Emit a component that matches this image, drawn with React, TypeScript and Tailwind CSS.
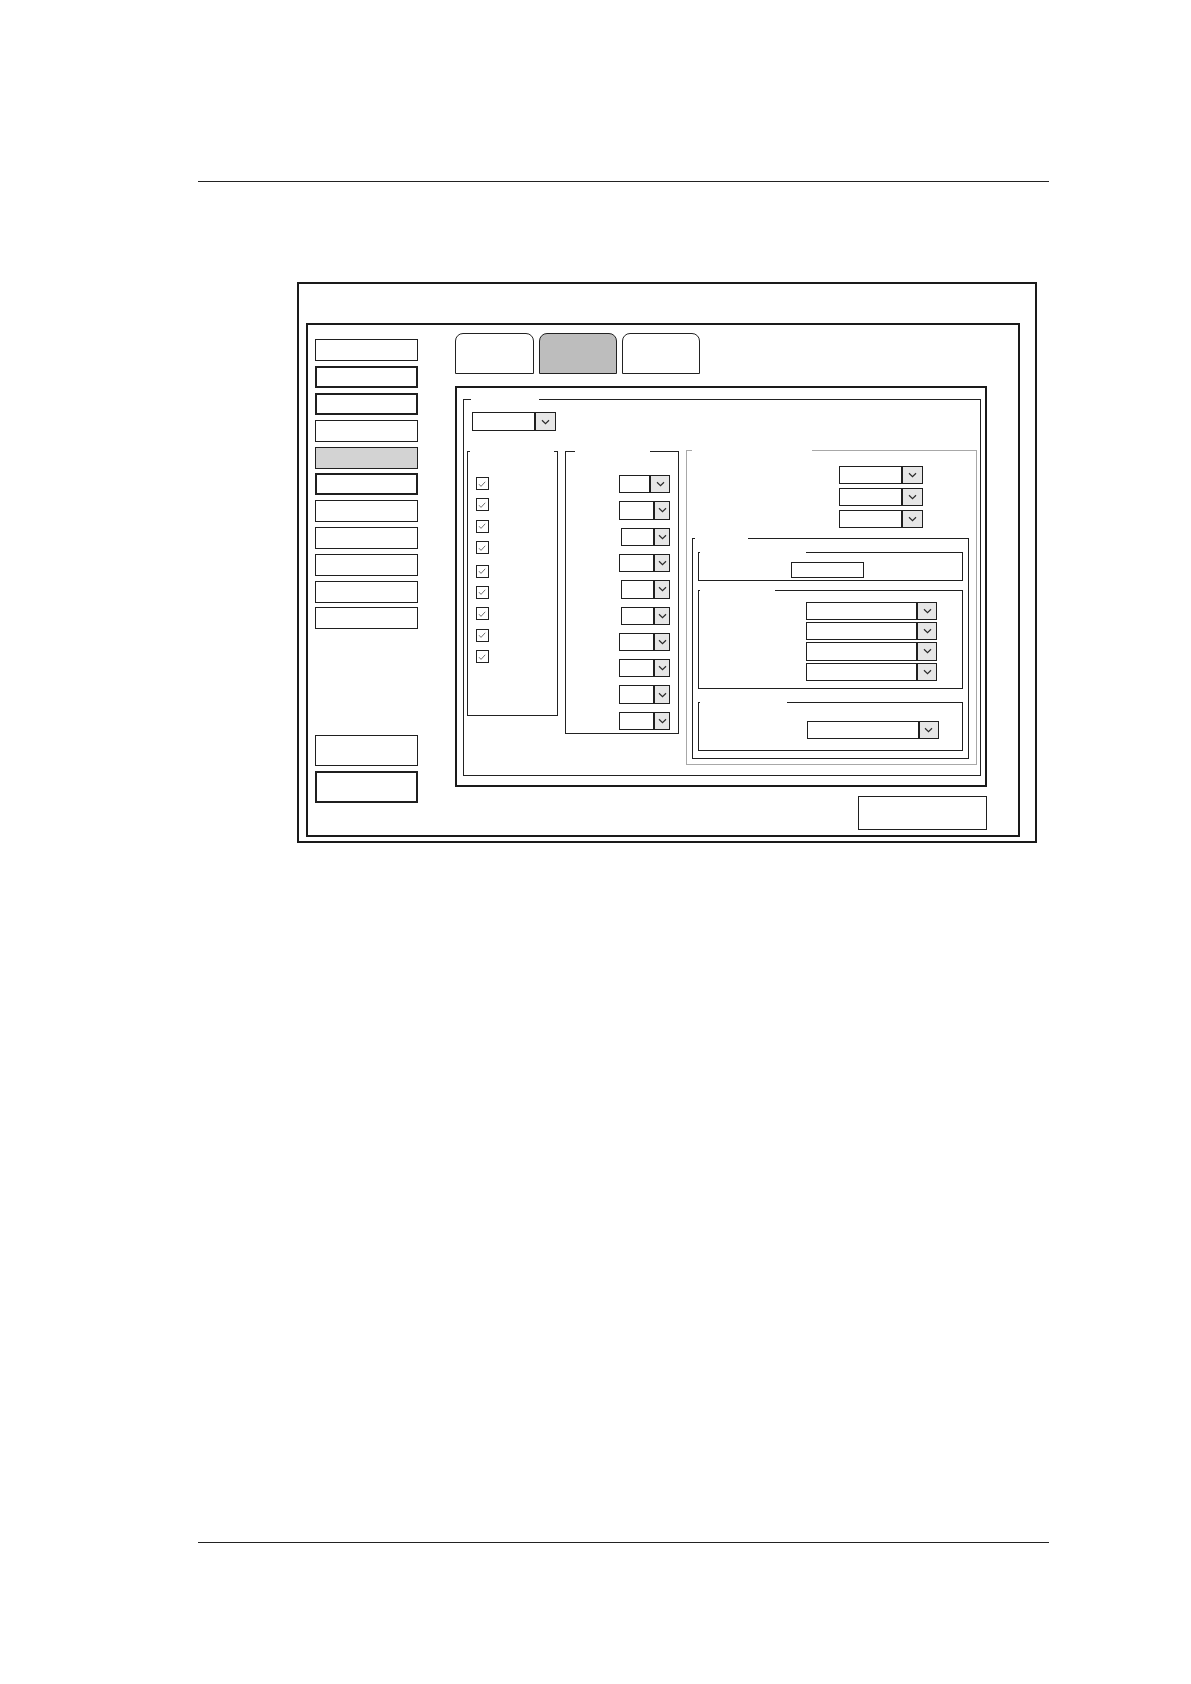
import React from 'react';

// Blank settings dialog drawn as a wireframe (manual illustration style).

const Chevron: React.FC = () => (
  <svg width="9" height="6" viewBox="0 0 9 6" fill="none">
    <path d="M1 1.2 L4.5 4.6 L8 1.2" stroke="#2a2a2a" strokeWidth="1.2" />
  </svg>
);

interface DropdownProps {
  box: string; // full width class of the text part
  arrow: string; // full width class of the arrow part
  height: string;
}

const Dropdown: React.FC<DropdownProps> = ({ box, arrow, height }) => (
  <div className={`flex shrink-0 ${height}`}>
    <div className={`${box} h-full border border-[#1f1f1f] bg-white`} />
    <div
      className={`${arrow} h-full border border-[#1f1f1f] bg-[#e6e6e6] flex items-center justify-center`}
    >
      <Chevron />
    </div>
  </div>
);

const CheckBox: React.FC<{ extra?: string }> = ({ extra = '' }) => (
  <div
    className={`w-[13px] h-[13px] border border-[#222] bg-white flex items-center justify-center ${extra}`}
  >
    <svg width="10" height="10" viewBox="0 0 10 10" fill="none">
      <path d="M2 5.2 L4 7.4 L8.2 2.8" stroke="#707070" strokeWidth="1" />
    </svg>
  </div>
);

const SIDE_BUTTONS = [
  'border',
  'border-2',
  'border-2',
  'border',
  'border bg-[#d3d3d3]',
  'border-2',
  'border',
  'border',
  'border',
  'border',
  'border',
];

// middle column selectors: text part width, arrow part width
const MID_SELECTS = [
  { box: 'w-[31px]', arrow: 'w-[20px]' },
  { box: 'w-[35px]', arrow: 'w-[16px]' },
  { box: 'w-[33px]', arrow: 'w-[16px]' },
  { box: 'w-[35px]', arrow: 'w-[16px]' },
  { box: 'w-[33px]', arrow: 'w-[16px]' },
  { box: 'w-[33px]', arrow: 'w-[16px]' },
  { box: 'w-[35px]', arrow: 'w-[16px]' },
  { box: 'w-[35px]', arrow: 'w-[16px]' },
  { box: 'w-[35px]', arrow: 'w-[16px]' },
  { box: 'w-[35px]', arrow: 'w-[16px]' },
];

const App: React.FC = () => {
  return (
    <div className="w-[1191px] h-[1684px] bg-white overflow-hidden font-['Liberation_Sans',sans-serif]">
      {/* header rule */}
      <div className="ml-[198px] mt-[181px] w-[851px] h-[1.4px] bg-[#222]" />

      {/* dialog outer frame */}
      <div className="ml-[297px] mt-[99.4px] w-[739.6px] h-[561.6px] border-2 border-[#1a1a1a] pt-[39.6px] pl-[6.7px] pr-[15px] pb-[4px]">
        {/* inner frame */}
        <div className="w-full h-full border-2 border-[#1a1a1a] flex">
          {/* sidebar */}
          <div className="ml-[7.6px] w-[102.4px] pt-[14px] flex flex-col">
            <div className="flex flex-col gap-[4.8px]">
              {SIDE_BUTTONS.map((cls, i) => (
                <div
                  key={i}
                  className={`h-[22px] border-[#1f1f1f] ${cls}`}
                />
              ))}
            </div>
            <div className="mt-[105.7px] h-[31.3px] border border-[#1f1f1f]" />
            <div className="mt-[5px] h-[32px] border-2 border-[#1f1f1f]" />
          </div>

          {/* main column */}
          <div className="ml-[37px] w-[532.6px] pt-[7.7px] flex flex-col">
            {/* tabs */}
            <div className="flex gap-[5px] h-[41.3px]">
              <div className="w-[79px] h-full rounded-t-[8px] border-[1.5px] border-[#222] bg-white" />
              <div className="w-[78.5px] h-full rounded-t-[8px] border-[1.5px] border-[#222] bg-[#bdbdbd]" />
              <div className="w-[78px] h-full rounded-t-[8px] border-[1.5px] border-[#222] bg-white" />
            </div>

            {/* content panel */}
            <div className="mt-[11.4px] h-[401.3px] border-2 border-[#1a1a1a] pl-[6.3px] pt-[11px]">
              {/* main group box */}
              <div className="w-[518.4px] h-[377.3px] border border-[#222]">
                <div className="-mt-px ml-[7.4px] w-[67.6px] h-px bg-white" />

                <div className="ml-[7.7px] mt-[12.3px]">
                  <Dropdown box="w-[63.7px]" arrow="w-[21px]" height="h-[19px]" />
                </div>

                <div className="ml-[3px] mt-[20.4px] flex items-start">
                  {/* checkbox group */}
                  <div className="w-[91px] h-[264.3px] border border-[#222]">
                    <div className="-mt-px ml-[1.7px] w-[84.3px] h-px bg-white" />
                    <div className="ml-[7.7px] mt-[24.6px] flex flex-col gap-[8.4px]">
                      <CheckBox />
                      <CheckBox />
                      <CheckBox />
                      <CheckBox />
                      <CheckBox extra="mt-[2px]" />
                      <CheckBox />
                      <CheckBox />
                      <CheckBox />
                      <CheckBox />
                    </div>
                  </div>

                  {/* selector group */}
                  <div className="ml-[7px] w-[114px] h-[282.6px] border border-[#222]">
                    <div className="-mt-px ml-[8.7px] w-[75px] h-px bg-white" />
                    <div className="mt-[22.6px] pr-[7.6px] flex flex-col items-end gap-[8px]">
                      {MID_SELECTS.map((s, i) => (
                        <Dropdown
                          key={i}
                          box={s.box}
                          arrow={s.arrow}
                          height="h-[18.3px]"
                        />
                      ))}
                    </div>
                  </div>

                  {/* right group */}
                  <div className="-mt-px ml-[6.7px] w-[291.7px] h-[314.6px] border border-[#a8a8a8]">
                    <div className="-mt-px ml-[5.7px] w-[120px] h-px bg-white" />
                    <div className="ml-[152.3px] mt-[14.3px] flex flex-col gap-[3.3px]">
                      <Dropdown box="w-[63.4px]" arrow="w-[21px]" height="h-[18.7px]" />
                      <Dropdown box="w-[63.4px]" arrow="w-[21px]" height="h-[18.7px]" />
                      <Dropdown box="w-[63.4px]" arrow="w-[21px]" height="h-[18.7px]" />
                    </div>

                    {/* nested box */}
                    <div className="ml-[5.3px] mt-[9.3px] w-[277.4px] h-[221px] border border-[#1f1f1f]">
                      <div className="-mt-px ml-[2.4px] w-[52.3px] h-px bg-white" />

                      <div className="ml-[5px] mt-[13px] w-[265.4px] h-[29px] border border-[#1f1f1f]">
                        <div className="-mt-px ml-[1.4px] w-[105.3px] h-px bg-white" />
                        <div className="ml-[91.7px] mt-[9px] w-[73.3px] h-[16px] border border-[#1f1f1f]" />
                      </div>

                      <div className="ml-[5px] mt-[9px] w-[265.4px] h-[99px] border border-[#1f1f1f]">
                        <div className="-mt-px ml-[1.4px] w-[74.6px] h-px bg-white" />
                        <div className="ml-[107px] mt-[11px] flex flex-col gap-[2px]">
                          <Dropdown box="w-[111.4px]" arrow="w-[20px]" height="h-[18.3px]" />
                          <Dropdown box="w-[111.4px]" arrow="w-[20px]" height="h-[18.3px]" />
                          <Dropdown box="w-[111.4px]" arrow="w-[20px]" height="h-[18.3px]" />
                          <Dropdown box="w-[111.4px]" arrow="w-[20px]" height="h-[18.3px]" />
                        </div>
                      </div>

                      <div className="ml-[5px] mt-[13px] w-[265.4px] h-[49px] border border-[#1f1f1f]">
                        <div className="-mt-px ml-[1.4px] w-[86.3px] h-px bg-white" />
                        <div className="ml-[108px] mt-[18px]">
                          <Dropdown box="w-[111.7px]" arrow="w-[20.7px]" height="h-[18px]" />
                        </div>
                      </div>
                    </div>
                  </div>
                </div>
              </div>
            </div>

            {/* bottom action button */}
            <div className="mt-[9.3px] flex justify-end">
              <div className="w-[129px] h-[34px] border border-[#1f1f1f]" />
            </div>
          </div>
        </div>
      </div>

      {/* footer rule */}
      <div className="ml-[198px] mt-[698.7px] w-[851px] h-[1.4px] bg-[#222]" />
    </div>
  );
};

export default App;
